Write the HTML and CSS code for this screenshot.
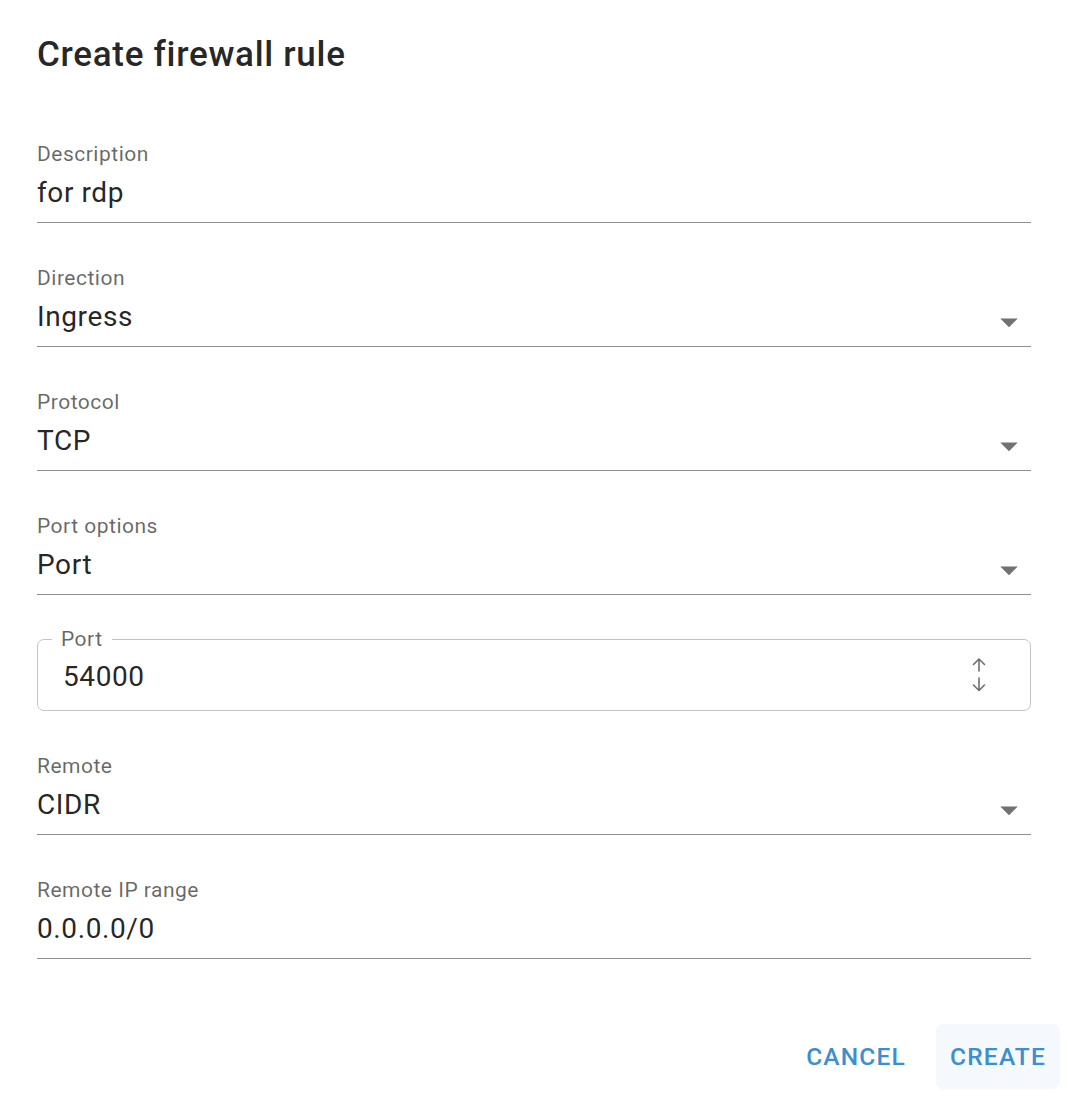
FILE: index.html
```html
<!DOCTYPE html>
<html lang="en">
<head>
<meta charset="utf-8">
<title>Create firewall rule</title>
<link rel="stylesheet" href="styles.css">
</head>
<body>
<div class="dialog">
  <h2 class="title">Create firewall rule</h2>
  <div class="content">
    <div class="field">
      <label class="label">Description</label>
      <div class="input">for rdp</div>
    </div>
    <div class="field">
      <label class="label">Direction</label>
      <div class="input">Ingress
        <svg class="caret" viewBox="0 0 24 24"><path d="M7 10l5 5 5-5z"/></svg>
      </div>
    </div>
    <div class="field">
      <label class="label">Protocol</label>
      <div class="input">TCP
        <svg class="caret" viewBox="0 0 24 24"><path d="M7 10l5 5 5-5z"/></svg>
      </div>
    </div>
    <div class="field">
      <label class="label">Port options</label>
      <div class="input">Port
        <svg class="caret" viewBox="0 0 24 24"><path d="M7 10l5 5 5-5z"/></svg>
      </div>
    </div>
    <div class="outlined">
      <span class="notch-label">Port</span>
      <span class="outlined-value">54000</span>
      <svg class="spin" viewBox="0 0 16 38" width="16" height="38">
        <path d="M7 3V15M1.5 8.5L7 3L12.5 8.5"/>
        <path d="M7 22V34.5M1.5 29L7 34.5L12.5 29"/>
      </svg>
    </div>
    <div class="field">
      <label class="label">Remote</label>
      <div class="input">CIDR
        <svg class="caret" viewBox="0 0 24 24"><path d="M7 10l5 5 5-5z"/></svg>
      </div>
    </div>
    <div class="field">
      <label class="label">Remote IP range</label>
      <div class="input">0.0.0.0/0</div>
    </div>
  </div>
  <div class="actions">
    <button class="btn">Cancel</button>
    <button class="btn btn-primary">Create</button>
  </div>
</div>
</body>
</html>
```
FILE: styles.css
```css
html, body {
  margin: 0;
  padding: 0;
  background: #ffffff;
}

body {
  font-family: Roboto, "Liberation Sans", Arial, sans-serif;
  color: rgba(0, 0, 0, 0.87);
}

.dialog {
  width: 1072px;
  height: 1098px;
  box-sizing: border-box;
  padding-top: 27px;
}

.title {
  margin: 0;
  padding: 0 41px 0 37px;
  font-size: 35px;
  font-weight: 500;
  line-height: 56px;
  letter-spacing: 0.7px;
  color: rgba(0, 0, 0, 0.87);
}

.content {
  padding: 0 41px 0 37px;
  margin-top: 59px;
  display: flex;
  flex-direction: column;
  gap: 43px;
}

.field {
  display: flex;
  flex-direction: column;
}

.label {
  font-size: 21px;
  line-height: 24px;
  letter-spacing: 0.5px;
  color: rgba(0, 0, 0, 0.6);
}

.input {
  position: relative;
  margin-top: 7px;
  font-size: 28px;
  line-height: 40px;
  padding-bottom: 9px;
  border-bottom: 1px solid #8e8e8e;
  color: rgba(0, 0, 0, 0.87);
  letter-spacing: 0.6px;
}

.caret {
  position: absolute;
  right: 1px;
  top: 4px;
  width: 42px;
  height: 42px;
  fill: #717171;
}

.outlined {
  position: relative;
  margin-top: 1px;
  height: 70px;
  border: 1px solid #c4c4c4;
  border-radius: 7px;
  display: flex;
  align-items: center;
  padding: 0 42px 0 25px;
}

.notch-label {
  position: absolute;
  left: 14px;
  top: -13px;
  padding: 0 9px;
  background: #ffffff;
  font-size: 21px;
  line-height: 24px;
  letter-spacing: 0.5px;
  color: rgba(0, 0, 0, 0.6);
}

.outlined-value {
  flex: 1;
  padding-top: 3px;
  font-size: 28px;
  line-height: 40px;
  letter-spacing: 0.6px;
  color: rgba(0, 0, 0, 0.87);
}

.spin {
  fill: none;
  stroke: #6e6e6e;
  stroke-width: 1.6;
  stroke-linecap: round;
  stroke-linejoin: round;
}

.actions {
  margin-top: 65px;
  display: flex;
  justify-content: flex-end;
  gap: 16px;
  padding-right: 12px;
}

.btn {
  font-family: Roboto, "Liberation Sans", Arial, sans-serif;
  font-size: 24.5px;
  font-weight: 500;
  line-height: 43px;
  letter-spacing: 1.2px;
  text-transform: uppercase;
  color: #3d8ecd;
  background: transparent;
  border: none;
  border-radius: 7px;
  padding: 11px 14px;
  min-width: 112px;
  cursor: pointer;
}

.btn-primary {
  background: #f5f9fd;
}
```
